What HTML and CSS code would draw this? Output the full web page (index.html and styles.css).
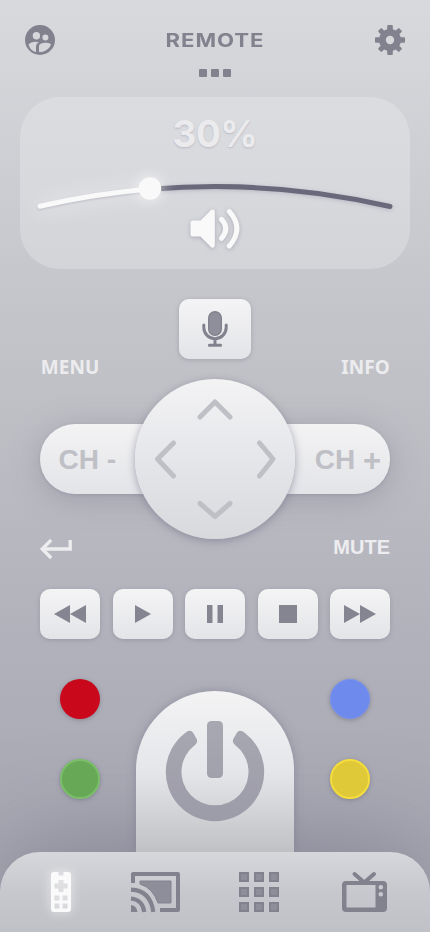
FILE: index.html
```html
<!DOCTYPE html>
<html lang="en">
<head>
<meta charset="utf-8">
<meta name="viewport" content="width=device-width, initial-scale=1">
<title>Remote</title>
<link rel="stylesheet" href="styles.css">
</head>
<body>
<div class="app">
  <header class="header">
    <svg class="header-icon" viewBox="0 0 30 30"><path fill="#82828f" fill-rule="evenodd" d="M15 0a15 15 0 1 1 0 30a15 15 0 0 1 0-30ZM11.4 7.1a3.7 3.7 0 1 0 0 7.4a3.7 3.7 0 0 0 0-7.4ZM20.4 9.4a3 3 0 1 0 0 6a3 3 0 0 0 0-6ZM3.6 19.2C4.4 23.6 7.6 26.2 11 27V21.5C11 19.5 12.4 18.2 13.8 17.3C9.5 16.1 6.3 16.8 3.6 19.2ZM14 27.1C20 27.3 24.2 24 26 19.3C22.2 16.8 14 17.5 14 21.5Z"/></svg>
    <div class="heading">
      <h1 class="title">REMOTE</h1>
      <div class="pages"><i></i><i></i><i></i></div>
    </div>
    <svg class="header-icon" viewBox="0 0 30 30"><g fill="#82828f"><path fill-rule="evenodd" d="M15 4a11 11 0 1 1 0 22a11 11 0 0 1 0-22ZM15 10.8a4.2 4.2 0 1 0 0 8.4a4.2 4.2 0 0 0 0-8.4Z"/><rect x="12.2" width="5.6" height="8" rx="1"/><rect x="12.2" y="22" width="5.6" height="8" rx="1"/><rect y="12.2" width="8" height="5.6" rx="1"/><rect x="22" y="12.2" width="8" height="5.6" rx="1"/><g transform="rotate(45 15 15)"><rect x="12.5" y=".2" width="5" height="7" rx="1"/><rect x="12.5" y="22.8" width="5" height="7" rx="1"/><rect x=".2" y="12.5" width="7" height="5" rx="1"/><rect x="22.8" y="12.5" width="7" height="5" rx="1"/></g></g></svg>
  </header>

  <section class="volume">
    <div class="level">30%</div>
    <svg class="arc" viewBox="0 0 390 37">
      <path class="arc-rest" d="M130 18.100Q250 7.900 370 35.300" transform="translate(0 .2)"/>
      <path class="arc-fill" d="M20 35.300Q75 22.700 130 18.100"/>
      <circle class="knob" cx="130" cy="17.500" r="11.200"/>
    </svg>
    <svg class="speaker" viewBox="0 0 50 42"><path fill="#f9f9fa" d="M2.5 12.5H10.5L21 2Q24.8.6 24.8 4V37Q24.8 40.5 21.5 39.5L10.5 28.5H2.5Q.5 28.5.5 26V15Q.5 12.5 2.5 12.5Z"/><path d="M31.5 11.3Q40 20.5 31.5 30.3M39.3 3.5Q54.5 20.5 39.3 38" fill="none" stroke="#f9f9fa" stroke-width="5" stroke-linecap="round"/></svg>
  </section>

  <button class="key mic" aria-label="Voice"><svg width="32" height="38" viewBox="0 0 32 38"><rect x="9.7" y="1.7" width="12.6" height="23.6" rx="6.3" fill="#8f8f9b" stroke="#82828f" stroke-width="1.4"/><path d="M4.8 15V17.5A11.2 11.2 0 0 0 27.2 17.5V15M16 29V35M10.4 35.2H21.6" fill="none" stroke="#82828f" stroke-width="3" stroke-linecap="round"/></svg></button>

  <section class="control">
    <span class="label menu">MENU</span><span class="label info">INFO</span>
    <div class="channels"><span class="down">CH -</span><span class="up">CH <b>+</b></span></div>
    <div class="dpad"><svg viewBox="0 0 160 160"><path d="M65 38L80 23L95 38M38.5 64L22.5 80L38.5 97M124.500 64L138 80L124.500 97M65 124.500L80 137.500L95 124.500" fill="none" stroke="#bfc0c5" stroke-width="5" stroke-linecap="round" stroke-linejoin="round"/></svg></div>
    <svg class="back" viewBox="0 0 32 20"><path d="M30.200 1V10H3M11.200 1L2.200 10L11.200 19" fill="none" stroke="#ededf0" stroke-width="3.300"/></svg><span class="mute">MUTE</span>
  </section>

  <section class="transport">
    <button class="key" aria-label="Rewind"><svg viewBox="0 0 32 18"><path d="M16 0V18L0 9ZM32 0V18L16 9Z"/></svg></button>
    <button class="key" aria-label="Play"><svg viewBox="0 0 32 18"><path d="M8 0V18L24 9Z"/></svg></button>
    <button class="key" aria-label="Pause"><svg viewBox="0 0 32 18"><path d="M8 0H13.500V18H8ZM18.500 0H24V18H18.500Z"/></svg></button>
    <button class="key" aria-label="Stop"><svg viewBox="0 0 32 18"><path d="M7 0H25V18H7Z"/></svg></button>
    <button class="key" aria-label="Forward"><svg viewBox="0 0 32 18"><path d="M0 0V18L16 9ZM16 0V18L32 9Z"/></svg></button>
  </section>

  <section class="bottom">
    <div class="colors"><button class="dot red" aria-label="Red"></button><button class="dot green" aria-label="Green"></button></div>
    <button class="power" aria-label="Power"><svg viewBox="0 0 100 101"><defs><linearGradient id="pw" x1="0" y1="0" x2="0" y2="101" gradientUnits="userSpaceOnUse"><stop offset="0" stop-color="#a8a8b2"/><stop offset="1" stop-color="#9c9ba8"/></linearGradient></defs><path fill="url(#pw)" d="M19.800 13.200A49.200 49.200 0 1 0 80.200 13.200Q74.500 8.500 71.700 13L68.300 19Q66.800 22 70 25A33.500 33.500 0 1 1 30 25Q33.200 22 31.700 19L28.300 13Q25.500 8.500 19.800 13.200Z"/><rect x="42" y="1" width="16" height="57" rx="4.500" fill="url(#pw)"/></svg></button>
    <div class="colors"><button class="dot blue" aria-label="Blue"></button><button class="dot yellow" aria-label="Yellow"></button></div>
  </section>

  <nav class="tabs">
    <svg class="tab active" width="20" height="40" viewBox="0 0 20 40"><path fill="#fafafb" fill-rule="evenodd" d="M3 0H7.500V3.500H12.500V0H17Q20 0 20 3V37Q20 40 17 40H3Q0 40 0 37V3Q0 0 3 0ZM7.500 8V11.500H3.500V16.500H7.500V20H12.500V16.500H16.500V11.500H12.500V8ZM3.500 23.500V28.500H8.500V23.500ZM11.500 23.500V28.500H16.500V23.500ZM3.500 31.500V36.500H8.500V31.500ZM11.500 31.500V36.500H16.500V31.500Z"/></svg>
    <svg class="tab cast" width="50" height="40" viewBox="0 0 50 40"><path d="M2 11V2H47V38H29" fill="none" stroke="#82828f" stroke-width="4" stroke-linejoin="round"/><path d="M9 9H40V31H27Q22 16 9 12Z" fill="#8e8e9a" stroke="#82828f"/><g fill="none" stroke="#82828f" stroke-width="4.200"><path d="M0 17.700Q19.500 18.500 22.300 40M0 26.500Q11.500 27.500 13.300 40"/></g><path fill="#82828f" d="M0 33Q5.500 33.500 6.500 40H0Z"/></svg>
    <svg class="tab apps" width="40" height="40" viewBox="0 0 40 40" fill="#8e8e9a" stroke="#82828f" stroke-width="2"><path d="M1 1H9V9H1ZM16 1H24V9H16ZM31 1H39V9H31ZM1 16H9V24H1ZM16 16H24V24H16ZM31 16H39V24H31ZM1 31H9V39H1ZM16 31H24V39H16ZM31 31H39V39H31Z"/></svg>
    <svg class="tab tv" width="46" height="40" viewBox="0 0 46 40"><path d="M12.500 2L22.300 10.500L32 2" fill="none" stroke="#82828f" stroke-width="4" stroke-linecap="round"/><path fill="#82828f" fill-rule="evenodd" d="M4 9H41Q45 9 45 13V36Q45 40 41 40H4Q0 40 0 36V13Q0 9 4 9ZM4.500 13V35.500H33.500V13ZM38.800 13A2.300 2.300 0 1 0 38.800 17.600A2.300 2.300 0 0 0 38.800 13ZM38.800 20A2.300 2.300 0 1 0 38.800 24.600A2.300 2.300 0 0 0 38.800 20Z"/></svg>
  </nav>
</div>
</body>
</html>
```
FILE: styles.css
```css
* { box-sizing: border-box; }
body { margin: 0; font-family: "Liberation Sans", sans-serif; }
button { border: 0; padding: 0; display: grid; place-items: center; }
svg { display: block; overflow: visible; }
.app { width: 430px; height: 932px; overflow: hidden; display: flex; flex-direction: column; background: linear-gradient(#d8d9dd 0, #d4d5d9 70px, #c5c6cb 290px, #bfc0c5 400px, #b7b7c0 540px, #b1b1bb 640px, #aaaab5 800px, #a7a7b1 932px); }

.header { height: 97px; padding: 25px 25px 0; display: flex; justify-content: space-between; align-items: flex-start; }
.header-icon { width: 30px; height: 30px; }
.heading { display: flex; flex-direction: column; align-items: center; }
.title { margin: 0; padding-top: 1px; width: 98px; height: 30px; display: flex; justify-content: center; color: #82828f; font: 700 19px/30px Inter, sans-serif; letter-spacing: .8px; transform: scaleX(1.165); }
.pages { display: flex; gap: 4px; margin-top: 14px; }
.pages i { width: 7.7px; height: 8px; border-radius: 1px; background: #82828f; }

.volume { height: 172px; margin: 0 20px; flex: none; border-radius: 40px; display: flex; flex-direction: column; align-items: center; background: linear-gradient(#dbdce0, #d8d9dd 50%, #d3d4d8); }
.level { height: 74px; padding-top: 15px; color: #ebebed; font: 700 37px/44px Inter, sans-serif; letter-spacing: -.5px; text-shadow: 0 1px 2px #b9b9c2; }
.arc { width: 390px; height: 37px; flex: none; }
.arc path { fill: none; stroke-width: 5; stroke-linecap: round; }
.arc-rest { stroke: #69697b; filter: drop-shadow(0 1px 2px #b7b7c3); }
.arc-fill { stroke: #f9f9fa; filter: drop-shadow(0 1px 1px #bbbbc5) drop-shadow(0 0 10px #ffffff99); }
.knob { fill: #f9f9fa; filter: drop-shadow(0 0 8px #ffffffcc); }
.speaker { width: 50px; height: 42px; filter: drop-shadow(0 1px 2px #aaaab6); }

.key { width: 60px; height: 50px; border-radius: 10px; background: linear-gradient(#f4f4f5, #e3e4e8); box-shadow: 0 1px 4px #73738566; }
.mic { width: 72px; height: 60px; margin: 30px auto 0; flex: none; }

.control { height: 230px; flex: none; padding: 0 40px; display: grid; grid-template: 65px 70px 95px / 1fr 1fr; }
.label { font: 700 19px/22px "Noto Sans", sans-serif; letter-spacing: .1px; color: #ececef; height: 22px; margin-top: -3px; }
.info, .mute { justify-self: end; }
.channels { grid-area: 2 / 1 / 3 / 3; display: flex; justify-content: space-between; align-items: center; border-radius: 35px; padding: 0 9px 0 18.5px; color: #bfc0c6; font: 700 28px/32px "Liberation Sans", sans-serif; background: linear-gradient(#f3f3f4, #e3e4e8); box-shadow: 0 1px 3px #84849566, 0 5px 30px #78788c66; }
.down, .up { padding-top: 2px; }
.up b { font-size: 31px; line-height: 20px; vertical-align: -2px; }
.dpad { grid-area: 1 / 1 / 4 / 3; width: 160px; height: 160px; margin-top: 20px; justify-self: center; border-radius: 50%; background: linear-gradient(#f3f3f4, #e5e6ea 50%, #d8d9dd); box-shadow: 0 2px 8px #72728799; }
.menu { grid-area: 1 / 1; padding-left: .7px; }
.info { grid-area: 1 / 2; }
.back { grid-area: 3 / 1; width: 32px; height: 20px; margin-top: 45px; }
.mute { grid-area: 3 / 2; margin-top: 42px; font: 700 20px/22px "Liberation Sans", sans-serif; color: #ededf0; }

.transport { display: flex; justify-content: space-between; padding: 0 40px; }
.transport svg { width: 32px; height: 18px; fill: #858592; }

.bottom { height: 213px; flex: none; padding-top: 40px; display: flex; justify-content: space-between; position: relative; z-index: 1; }
.colors { width: 136px; display: flex; flex-direction: column; align-items: center; gap: 40px; }
.colors:first-child { padding-left: 24px; }
.colors:last-child { padding-right: 24px; }
.dot { width: 40px; height: 40px; border-radius: 50%; box-shadow: 0 1px 4px #65657888; }
.red { background: #c9081b; }
.green { background: #66a856; border: 2px solid #7abf67; }
.blue { background: #6d8aec; border: 1px solid #7893ee; }
.yellow { background: #dfc939; border: 2px solid #f5dd3b; }
.power { width: 158px; height: 161px; margin-top: 12px; place-items: start center; padding-top: 29px; border-radius: 79px 79px 0 0; background: linear-gradient(#f3f3f4 0, #e5e6ea 50%, #c0c1c5 100%); box-shadow: 0 0 10px #72728788; clip-path: inset(-20px -20px 0); }
.power svg { width: 100px; height: 101px; }

.tabs { height: 80px; flex: none; position: relative; border-radius: 40px 40px 0 0; display: flex; align-items: flex-start; padding: 20px 0 0 51px; background: linear-gradient(#d6d7db, #c7c8cd 50%, #c0c1c6); box-shadow: 0 0 100px #66657aaa; }
.active { filter: drop-shadow(0 0 6px #ffffffbb); }
.cast { margin-left: 60px; }
.apps { margin-left: 58px; }
.tv { margin-left: 63px; }
```
